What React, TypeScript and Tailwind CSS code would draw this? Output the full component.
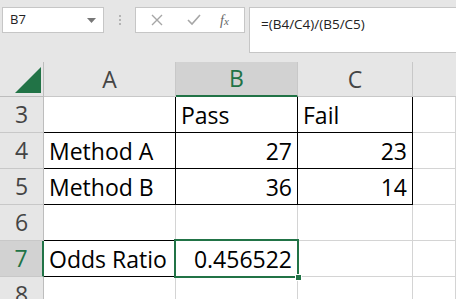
const COLS = ['44px', '132px', '122px', '115px', '1fr'];

const FONT = { fontFamily: '"Open Sans", "Noto Sans", sans-serif' };

type Cell = {
  text?: string;
  align?: 'left' | 'right';
  r?: 'grid' | 'black' | 'none';
  b?: 'grid' | 'black';
};

// rows 3..8, columns A..D
const ROWS: { n: string; cells: Cell[] }[] = [
  {
    n: '3',
    cells: [
      { r: 'black', b: 'black' },
      { text: 'Pass', r: 'black', b: 'black' },
      { text: 'Fail', r: 'black', b: 'black' },
      {},
    ],
  },
  {
    n: '4',
    cells: [
      { text: 'Method A', r: 'black', b: 'black' },
      { text: '27', align: 'right', r: 'black', b: 'black' },
      { text: '23', align: 'right', r: 'black', b: 'black' },
      {},
    ],
  },
  {
    n: '5',
    cells: [
      { text: 'Method B', r: 'black', b: 'black' },
      { text: '36', align: 'right', r: 'black', b: 'black' },
      { text: '14', align: 'right', r: 'black', b: 'black' },
      {},
    ],
  },
  {
    n: '6',
    cells: [{ b: 'black' }, { b: 'black' }, {}, {}],
  },
  {
    n: '7',
    cells: [
      { text: 'Odds Ratio', r: 'black', b: 'black' },
      { text: '0.456522', align: 'right' },
      {},
      {},
    ],
  },
  { n: '8', cells: [{}, {}, {}, {}] },
];

function DataCell({ cell }: { cell: Cell }) {
  const right = cell.r === 'black' ? 'border-r-black' : 'border-r-[#d4d4d4]';
  const bottom = cell.b === 'black' ? 'border-b-black' : 'border-b-[#d4d4d4]';
  return (
    <div
      className={`h-9 bg-white border-r border-b ${right} ${bottom} flex items-end px-[5px] pb-[2px] text-[23px] leading-none text-black ${
        cell.align === 'right' ? 'justify-end' : 'justify-start'
      }`}
    >
      <span className="leading-[30px]">{cell.text}</span>
    </div>
  );
}

export default function App() {
  return (
    <div className="w-[456px] h-[299px] overflow-hidden bg-[#e6e6e6] relative" style={FONT}>
      {/* Formula bar */}
      <div className="h-[62px] flex items-start pt-[7px] pl-[2px]">
        <div className="w-[102px] h-[26px] bg-white border border-[#c6c6c6] flex items-center justify-between pl-[7px] pr-[7px]">
          <span className="text-[13px] text-[#222]">B7</span>
          <svg width="9" height="5" viewBox="0 0 9 5">
            <path d="M0 0 L9 0 L4.5 5 Z" fill="#777" />
          </svg>
        </div>
        <div className="w-[31px] h-[26px] flex flex-col items-center justify-center gap-[2px]">
          <span className="w-[2px] h-[2px] bg-[#b4b4b4]" />
          <span className="w-[2px] h-[2px] bg-[#b4b4b4]" />
          <span className="w-[2px] h-[2px] bg-[#b4b4b4]" />
        </div>
        <div className="w-[110px] h-[26px] bg-white border border-[#c6c6c6] flex items-center pl-[14px]">
          <svg width="12" height="12" viewBox="0 0 12 12" className="ml-[1px]">
            <path d="M1 1 L11 11 M11 1 L1 11" stroke="#a6a6a6" strokeWidth="1.4" />
          </svg>
          <svg width="14" height="12" viewBox="0 0 14 12" className="ml-[24px]">
            <path d="M1 6 L5 10 L13 1" stroke="#a6a6a6" strokeWidth="1.6" fill="none" />
          </svg>
          <span
            className="ml-[19px] text-[14px] italic text-[#666]"
            style={{ fontFamily: '"Liberation Serif", serif' }}
          >
            f<span className="text-[11px]">x</span>
          </span>
        </div>
        <div className="ml-[4px] flex-1 h-[46px] bg-white border border-[#c6c6c6] border-r-0 pl-[11px] pt-[3px]">
          <span className="text-[13.5px] text-[#222]">=(B4/C4)/(B5/C5)</span>
        </div>
      </div>

      {/* Sheet grid */}
      <div className="grid" style={{ gridTemplateColumns: COLS.join(' ') }}>
        {/* corner */}
        <div className="h-[35px] border-r border-b border-[#bdbdbd] flex items-end justify-end pr-[2px] pb-[3px]">
          <svg width="26" height="26" viewBox="0 0 26 26">
            <path d="M26 0 L26 26 L0 26 Z" fill="#217346" />
          </svg>
        </div>
        <div className="h-[35px] border-r border-b border-[#c8c8c8] flex items-center justify-center text-[23px] text-[#444]">
          A
        </div>
        <div className="h-[35px] bg-[#d2d2d2] border-r border-[#c8c8c8] border-b-2 border-b-[#217346] flex items-center justify-center text-[23px] text-[#217346]">
          B
        </div>
        <div className="h-[35px] border-r border-b border-[#c8c8c8] flex items-center justify-center text-[23px] text-[#444]">
          C
        </div>
        <div className="h-[35px] border-b border-[#c8c8c8]" />

        {ROWS.map(row => {
          const selected = row.n === '7';
          return [
            <div
              key={`h${row.n}`}
              className={`h-9 border-b flex items-center justify-center text-[23px] ${
                selected
                  ? 'bg-[#d2d2d2] border-r-2 border-r-[#217346] border-b-[#c8c8c8] text-[#217346]'
                  : 'border-r border-r-[#bdbdbd] border-b-[#c8c8c8] text-[#444]'
              }`}
            >
              {row.n}
            </div>,
            ...row.cells.map((c, i) => <DataCell key={`${row.n}-${i}`} cell={c} />),
          ];
        })}
      </div>

      {/* active cell B7 */}
      <div className="absolute left-[174px] top-[239px] w-[125px] h-[39px] border-2 border-[#217346] pointer-events-none" />
      <div className="absolute left-[295px] top-[274px] w-[7px] h-[7px] bg-[#217346] border border-white" />
    </div>
  );
}
